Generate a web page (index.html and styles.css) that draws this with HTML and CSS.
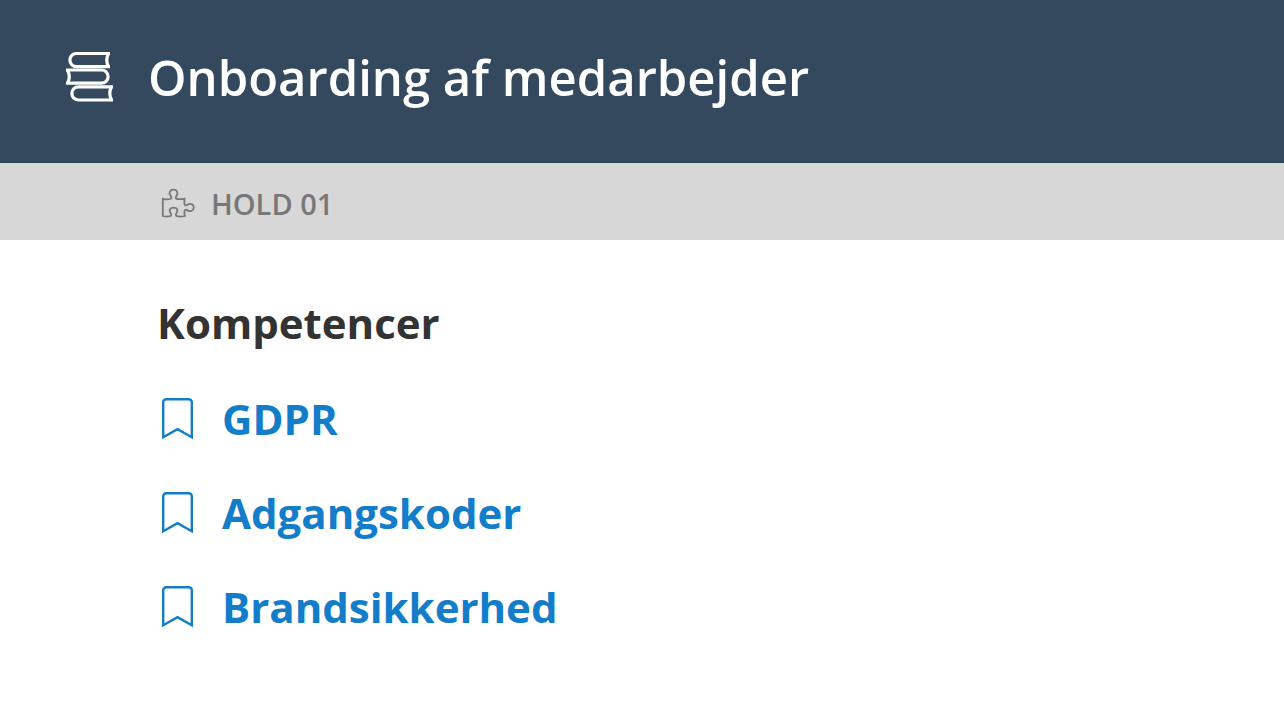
FILE: index.html
```html
<!DOCTYPE html>
<html lang="da">
<head>
  <meta charset="UTF-8" />
  <meta name="viewport" content="width=device-width, initial-scale=1.0"/>
  <title>Onboarding af medarbejder</title>
  <link rel="stylesheet" href="styles.css">
</head>
<body>
  <header class="page-header">
    <svg class="books-icon" viewBox="0 0 48 50" aria-hidden="true">
      <path d="M44 1.5H10.500a6.600 6.600 0 0 0 0 13.200H44M42.500 1.500q-3.500 6.600 0 13.200" />
      <path d="M0 18H35.500a6.600 6.600 0 0 1 0 13.200H0M1.500 18q3.500 6.600 0 13.200" />
      <path d="M47 34.800H12.500a6.600 6.600 0 0 0 0 13.200H47M45.500 34.800q-3.500 6.600 0 13.200" />
    </svg>
    <h1>Onboarding af medarbejder</h1>
  </header>

  <div class="team-bar">
    <svg class="puzzle-icon" viewBox="0 0 34 32" aria-hidden="true">
      <path d="M1.800 10.800Q6 12 9.300 11C11 10.300 10.600 9 9.600 7.800C7.300 4.800 9 1.700 12.500 1.700S17.700 4.800 15.600 7.800C14.500 9.200 14.400 10.700 16.200 11Q20 11.600 23.400 10.600V15.500C23.600 17.600 25 17.800 26.600 16.700C29.700 14.700 32.800 16.500 32.800 19.500S29.700 24.300 26.700 22.400C24.800 21.200 23.500 21.700 23.400 23.500Q23.200 26.200 24 28Q20 29 16.200 28.200C14.400 27.700 14.600 26.300 15.600 25C17.700 22.200 16 19.600 12.500 19.600S7.500 22.200 9.500 25C10.500 26.400 10.600 27.700 8.900 28.200Q5.500 29 1.800 28Z" />
    </svg>
    <h2>HOLD 01</h2>
  </div>

  <main class="content">
    <h2>Kompetencer</h2>
    <ul class="competences">
      <li>
        <a href="#gdpr">
          <svg class="bookmark-icon" viewBox="0 0 31 42" aria-hidden="true">
            <path d="M1.200 39.300V4.200a3 3 0 0 1 3-3H26.800a3 3 0 0 1 3 3V39.300L15.500 31.200Z" />
          </svg>
          <span>GDPR</span>
        </a>
      </li>
      <li>
        <a href="#adgangskoder">
          <svg class="bookmark-icon" viewBox="0 0 31 42" aria-hidden="true">
            <path d="M1.200 39.300V4.200a3 3 0 0 1 3-3H26.800a3 3 0 0 1 3 3V39.300L15.500 31.200Z" />
          </svg>
          <span>Adgangskoder</span>
        </a>
      </li>
      <li>
        <a href="#brandsikkerhed">
          <svg class="bookmark-icon" viewBox="0 0 31 42" aria-hidden="true">
            <path d="M1.200 39.300V4.200a3 3 0 0 1 3-3H26.800a3 3 0 0 1 3 3V39.300L15.500 31.200Z" />
          </svg>
          <span>Brandsikkerhed</span>
        </a>
      </li>
    </ul>
  </main>
</body>
</html>
```
FILE: styles.css
```css
* {
  box-sizing: border-box;
}

body {
  margin: 0;
  font-family: "Open Sans", sans-serif;
  background-color: #fff;
  color: #333;
}

h1,
h2 {
  margin: 0;
}

svg {
  flex: none;
  fill: none;
  stroke: currentColor;
}

.page-header {
  display: flex;
  align-items: center;
  gap: 34px;
  padding: 45px 66px 53px;
  border-bottom: 1px solid #2d4459;
  background-color: #34495e;
  color: #fff;
}

.page-header h1 {
  font-size: 49px;
  font-weight: 600;
  line-height: 64px;
}

.books-icon {
  width: 48px;
  height: 50px;
  stroke-width: 3.2;
}

.team-bar {
  display: flex;
  align-items: center;
  gap: 16px;
  padding: 21px 161px 18px;
  border-top: 1px solid #d3dadf;
  background-color: #d7d7d7;
  color: #777;
}

.team-bar h2 {
  font-size: 29px;
  font-weight: 600;
  line-height: 37px;
}

.puzzle-icon {
  width: 34px;
  height: 32px;
  stroke-width: 1.8;
}

.content {
  padding: 55px 157px;
}

.content h2 {
  font-size: 42px;
  font-weight: 700;
  line-height: 56px;
}

.competences {
  display: flex;
  flex-direction: column;
  gap: 38px;
  margin: 40px 0 0;
  padding: 0 0 0 5px;
  list-style: none;
}

.competences a {
  display: flex;
  align-items: center;
  gap: 29px;
  width: fit-content;
  color: #137dca;
  font-size: 42px;
  font-weight: 700;
  line-height: 56px;
  text-decoration: none;
}

.competences a:hover span {
  text-decoration: underline;
}

.bookmark-icon {
  width: 31px;
  height: 42px;
  stroke-width: 2.4;
}
```
